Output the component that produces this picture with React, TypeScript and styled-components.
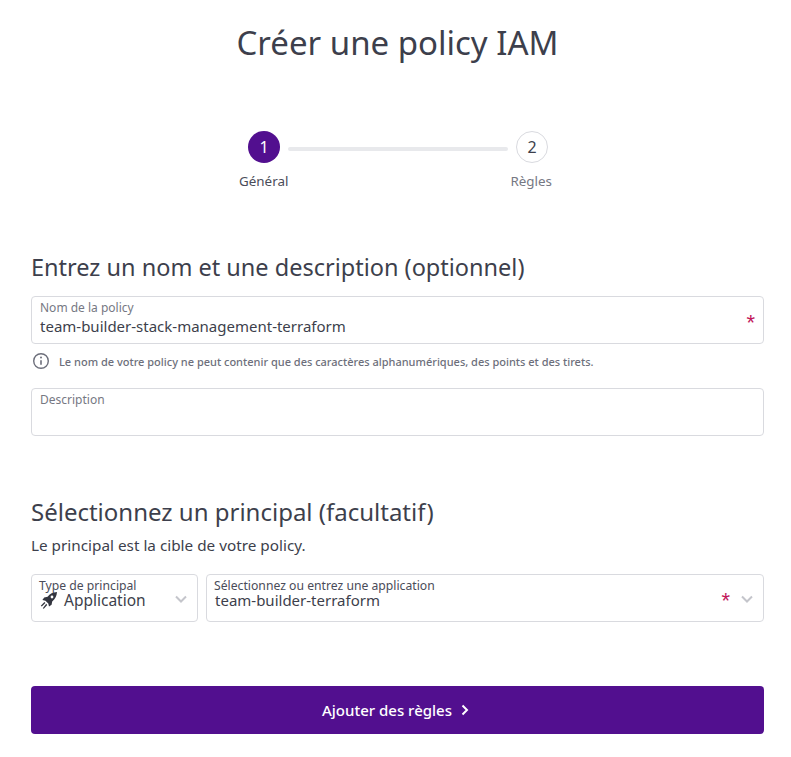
import React from "react";
import styled, { createGlobalStyle } from "styled-components";

const Global = createGlobalStyle`
  html, body { margin: 0; padding: 0; background: #fff; }
  body { font-family: "Noto Sans", "Open Sans", sans-serif; color: #3d3f4c; }
`;

const Page = styled.main`
  width: 791px;
  height: 757px;
  box-sizing: border-box;
  padding: 19px 27px 0 31px;
  overflow: hidden;
`;

const Title = styled.h1`
  margin: 0;
  height: 48px;
  font-size: 33px;
  line-height: 48px;
  font-weight: 400;
  text-align: center;
  color: #3d3f4c;
`;

const Stepper = styled.div`
  margin: 64px 0 0 217px;
  display: flex;
  align-items: center;
  gap: 8px;
  height: 32px;
`;

const Circle = styled.div<{ $active?: boolean }>`
  width: 32px;
  height: 32px;
  box-sizing: border-box;
  border-radius: 50%;
  display: flex;
  align-items: center;
  justify-content: center;
  font-size: 16px;
  background: ${(p) => (p.$active ? "#520f8f" : "#fff")};
  color: ${(p) => (p.$active ? "#fff" : "#3d3f4c")};
  border: ${(p) => (p.$active ? "none" : "1px solid #d9dadf")};
`;

const Line = styled.div`
  width: 220px;
  height: 4px;
  margin-top: 3px;
  border-radius: 2px;
  background: #e8e9ec;
`;

const StepLabels = styled.div`
  margin: 8px 0 0 208px;
  width: 313px;
  display: flex;
  justify-content: space-between;
`;

const StepLabel = styled.span<{ $muted?: boolean }>`
  font-size: 13.4px;
  line-height: 20px;
  color: ${(p) => (p.$muted ? "#767883" : "#4a4c59")};
`;

const Heading = styled.h2<{ $top: number; $size: number }>`
  margin: ${(p) => p.$top}px 0 0;
  font-size: ${(p) => p.$size}px;
  line-height: 32px;
  font-weight: 400;
  color: #3d3f4c;
`;

const Field = styled.div<{ $top: number }>`
  margin-top: ${(p) => p.$top}px;
  height: 48px;
  box-sizing: border-box;
  border: 1px solid #d9dadf;
  border-radius: 4px;
  padding: 3px 8px 0 8px;
  position: relative;
  background: #fff;
`;

const FieldLabel = styled.div`
  font-size: 12px;
  line-height: 15px;
  color: #767883;
`;

const FieldValue = styled.div`
  font-size: 15px;
  line-height: 22px;
  color: #3d3f4c;
`;

const Star = styled.span`
  color: #c2185b;
  font-size: 22px;
  line-height: 22px;
  font-family: "Liberation Sans", sans-serif;
`;

const FieldStar = styled(Star)`
  position: absolute;
  right: 8px;
  top: 15px;
`;

const Helper = styled.div`
  margin-top: 7px;
  height: 20px;
  display: flex;
  align-items: center;
  gap: 9px;
  padding-left: 1px;
  font-size: 11px;
  font-weight: 500;
  color: #6d6f7b;
  white-space: nowrap;
`;

const Sub = styled.p`
  margin: 6px 0 0;
  font-size: 15.3px;
  line-height: 22px;
  color: #3d3f4c;
`;

const SelectRow = styled.div`
  margin-top: 18px;
  display: flex;
  gap: 8px;
`;

const Select = styled.div<{ $wide?: boolean }>`
  height: 48px;
  box-sizing: border-box;
  border: 1px solid #d9dadf;
  border-radius: 4px;
  position: relative;
  padding: 4px 0 0 7px;
  ${(p) => (p.$wide ? "flex: 1;" : "width: 167px;")}
`;

const SelectLabel = styled.div`
  font-size: 12.2px;
  line-height: 14px;
  height: 14px;
  color: #4a4c59;
  white-space: nowrap;
`;

const SelectValue = styled.div<{ $size: number; $pad: number }>`
  display: flex;
  align-items: center;
  gap: 6px;
  font-size: ${(p) => p.$size}px;
  line-height: 15px;
  height: 15px;
  color: #3d3f4c;
  padding-left: ${(p) => p.$pad}px;
`;

const RocketIcon = styled.svg`
  flex: none;
  margin-top: -1px;
`;

const Chevron = styled.svg<{ $right: number }>`
  position: absolute;
  right: ${(p) => p.$right}px;
  top: 18px;
`;

const SelectStar = styled(Star)`
  position: absolute;
  right: 33px;
  top: 15px;
`;

const Primary = styled.button`
  margin-top: 64px;
  width: 100%;
  height: 48px;
  border: none;
  border-radius: 4px;
  background: #520f8f;
  color: #fff;
  font: 500 15px "Noto Sans", sans-serif;
  display: flex;
  align-items: center;
  justify-content: center;
  gap: 8px;
`;

const ChevronDown = ({ right }: { right: number }) => (
  <Chevron $right={right} width="12" height="12" viewBox="0 0 12 12" fill="none" stroke="#c4c5cb" strokeWidth="2">
    <path d="M1 3.500l5 5 5-5" />
  </Chevron>
);

const Info = () => (
  <svg width="18" height="18" viewBox="0 0 18 18" fill="none" stroke="#6d6f7b" strokeWidth="1.4">
    <circle cx="9" cy="9" r="7.300" />
    <path d="M9 8.200v4.600" strokeWidth="1.600" />
    <circle cx="9" cy="5.600" r="1" fill="#6d6f7b" stroke="none" />
  </svg>
);

const Rocket = () => (
  <RocketIcon width="18" height="18" viewBox="0 0 18 18" fill="#33353f">
    <path d="M17 1c-4 .2-7.200 1.800-9.400 4.800l-3.400.6L2.400 9l3 .7 2.900 2.900.7 3 2.600-1.800.6-3.400C15.200 8.200 16.800 5 17 1z" />
    <circle cx="12" cy="6" r="1.400" fill="#fff" />
    <path d="M4.400 11 .8 14.800l1 .8 3.600-3.600zM6.200 12.800 2.800 17.200l1 .6 3.400-3.800z" />
  </RocketIcon>
);

const ArrowRight = () => (
  <svg width="13" height="12" viewBox="0 0 13 12" fill="none" stroke="#fff" strokeWidth="2">
    <path d="M2.500 1.500 7 6l-4.500 4.500" />
  </svg>
);

export default function App() {
  return (
    <>
      <Global />
      <Page>
        <Title>Créer une policy IAM</Title>
        <Stepper>
          <Circle $active>1</Circle>
          <Line />
          <Circle>2</Circle>
        </Stepper>
        <StepLabels>
          <StepLabel>Général</StepLabel>
          <StepLabel $muted>Règles</StepLabel>
        </StepLabels>
        <Heading $top={60} $size={23.5}>Entrez un nom et une description (optionnel)</Heading>
        <Field $top={13}>
          <FieldLabel>Nom de la policy</FieldLabel>
          <FieldValue>team-builder-stack-management-terraform</FieldValue>
          <FieldStar>*</FieldStar>
        </Field>
        <Helper>
          <Info />
          Le nom de votre policy ne peut contenir que des caractères alphanumériques, des points et des tirets.
        </Helper>
        <Field $top={17}>
          <FieldLabel>Description</FieldLabel>
        </Field>
        <Heading $top={60} $size={24}>Sélectionnez un principal (facultatif)</Heading>
        <Sub>Le principal est la cible de votre policy.</Sub>
        <SelectRow>
          <Select>
            <SelectLabel>Type de principal</SelectLabel>
            <SelectValue $size={15.5} $pad={1}>
              <Rocket />
              Application
            </SelectValue>
            <ChevronDown right={10} />
          </Select>
          <Select $wide>
            <SelectLabel>Sélectionnez ou entrez une application</SelectLabel>
            <SelectValue $size={15} $pad={1}>team-builder-terraform</SelectValue>
            <SelectStar>*</SelectStar>
            <ChevronDown right={10} />
          </Select>
        </SelectRow>
        <Primary>
          Ajouter des règles
          <ArrowRight />
        </Primary>
      </Page>
    </>
  );
}
